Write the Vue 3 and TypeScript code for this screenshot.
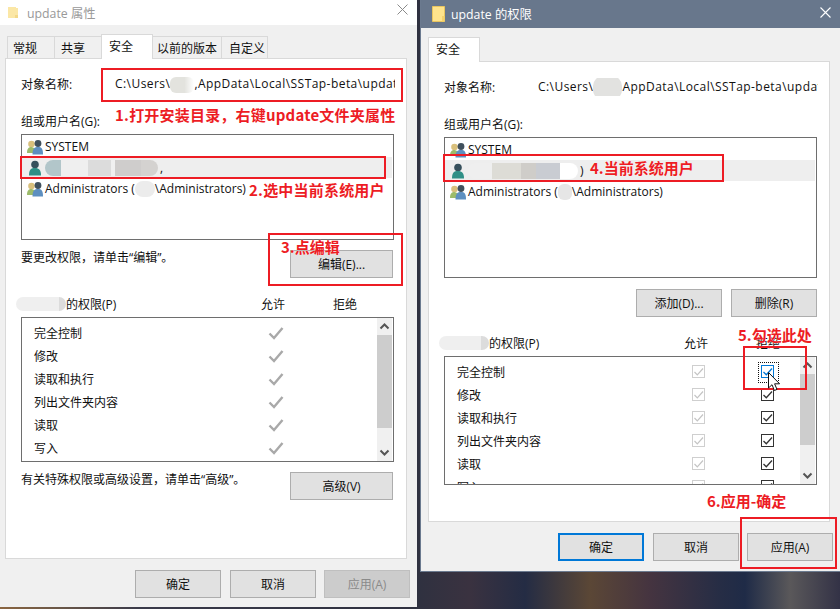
<script setup lang="ts">
const tabs = [
  { label: '常规', w: 48, pad: 5 },
  { label: '共享', w: 48, pad: 6 },
  { label: '安全', w: 52, pad: 7, active: true },
  { label: '以前的版本', w: 70, pad: 4 },
  { label: '自定义', w: 47, pad: 7 },
]
const perms = ['完全控制', '修改', '读取和执行', '列出文件夹内容', '读取', '写入']
const notes = [
  { cls: 'n1', text: '1.打开安装目录\uFF0C右键update文件夹属性' },
  { cls: 'n2', text: '2.选中当前系统用户' },
  { cls: 'n3', text: '3.点编辑' },
  { cls: 'n4', text: '4.当前系统用户' },
  { cls: 'n5', text: '5.勾选此处' },
  { cls: 'n6', text: '6.应用-确定' },
]
const frames = ['f1', 'f2', 'f3', 'f4', 'f5', 'f6']
const hintEdit = '要更改权限\uFF0C请单击\u201C编辑\u201D\u3002'
const hintAdv = '有关特殊权限或高级设置\uFF0C请单击\u201C高级\u201D\u3002'
</script>

<template>
  <div class="desk">
    <!-- left window -->
    <section class="win win-left">
      <header class="title title-left">
        <svg class="folder-l" viewBox="0 0 10 11"><path d="M0 0h8v1h2v10H0z" fill="#fbe7a6" /><path d="M7 8h3v3H7z" fill="#f3d888" /></svg>
        <span>update 属性</span>
        <svg class="close close-l" viewBox="0 0 11 11"><path d="M.5.5l10 10M10.5.5l-10 10" stroke="#8a8a8a" fill="none" /></svg>
      </header>
      <div class="tabs tabs-left">
        <div v-for="t in tabs" :key="t.label" class="tab" :class="{ active: t.active }" :style="{ width: t.w + 'px', paddingLeft: t.pad + 'px' }">{{ t.label }}</div>
      </div>
      <div class="panel panel-left">
        <div class="obj"><span class="obj-label">对象名称:</span>
          <span class="path">C:\Users\<i class="blot blot-path-l"></i>,AppData\Local\SSTap-beta\update</span>
        </div>
        <div class="lbl gap-group">组或用户名(G):</div>
        <div class="users users-left">
          <div class="u-row">
            <svg class="ico" viewBox="0 0 16 16"><circle cx="4.500" cy="5" r="3.300" fill="#d9c07c" /><path d="M0 14c0-5 2-6 4.500-6s4 2 4 6z" fill="#9cbb6a" /><circle cx="11" cy="4.500" r="3.400" fill="#40505c" /><path d="M5.500 15.500c0-6 2-7.500 5.500-7.500s5 1.500 5 7.500z" fill="#5d8fc0" /></svg>
            <span>SYSTEM</span>
          </div>
          <div class="u-row sel">
            <svg class="ico" viewBox="0 0 16 16"><circle cx="8" cy="4.500" r="3.800" fill="#37505c" /><path d="M2 15.500c0-6 2-7.500 6-7.500s6 2 6 7.500z" fill="#2f8f86" /></svg>
            <i class="blot blot-user-l"></i><span>,</span>
          </div>
          <div class="u-row">
            <svg class="ico" viewBox="0 0 16 16"><circle cx="4.500" cy="5" r="3.300" fill="#d9c07c" /><path d="M0 14c0-5 2-6 4.500-6s4 2 4 6z" fill="#9cbb6a" /><circle cx="11" cy="4.500" r="3.400" fill="#40505c" /><path d="M5.500 15.500c0-6 2-7.500 5.500-7.500s5 1.500 5 7.500z" fill="#5d8fc0" /></svg>
            <span>Administrators (<i class="blot blot-admin-l"></i>\Administrators)</span>
          </div>
        </div>
        <div class="action gap-act">
          <span class="hint">{{ hintEdit }}</span>
          <button class="btn wide">编辑(E)...</button>
        </div>
        <div class="perm-head gap-head">
          <span class="ph-name"><i class="blot blot-head"></i>的权限(P)</span><span class="ph-col">允许</span><span class="ph-col">拒绝</span>
        </div>
        <div class="perm-list perm-left">
          <div class="perm-rows">
            <div v-for="p in perms" :key="p" class="p-row">
              <span>{{ p }}</span>
              <svg class="tick" viewBox="0 0 16 14"><path d="M1.500 7.500l4.500 4.500L14.500 2" stroke="#a9a9a9" stroke-width="2.400" fill="none" /></svg>
            </div>
          </div>
          <div class="sbar">
            <svg class="arrow" viewBox="0 0 15 17"><path d="M3.500 10.500l4-4 4 4" stroke="#555" stroke-width="2" fill="none" /></svg>
            <div class="thumb thumb-l"></div>
            <div class="sfill"></div>
            <svg class="arrow" viewBox="0 0 15 17"><path d="M3.500 6.500l4 4 4-4" stroke="#555" stroke-width="2" fill="none" /></svg>
          </div>
        </div>
        <div class="action gap-act">
          <span class="hint">{{ hintAdv }}</span>
          <button class="btn wide">高级(V)</button>
        </div>
      </div>
      <footer class="foot foot-left">
        <button class="btn">确定</button>
        <button class="btn">取消</button>
        <button class="btn off">应用(A)</button>
      </footer>
    </section>

    <!-- right window -->
    <section class="win win-right">
      <header class="title title-right">
        <svg class="folder-r" viewBox="0 0 13 16"><path d="M.5.5h12v15H.5z" fill="#ffe48c" stroke="#e9c55f" /><path d="M10 10h2.500v5.500H10z" fill="#f5d26c" /></svg>
        <span>update 的权限</span>
        <svg class="close close-r" viewBox="0 0 11 11"><path d="M.5.5l10 10M10.500.5l-10 10" stroke="#fff" fill="none" stroke-width="1.100" /></svg>
      </header>
      <div class="tabs">
        <div class="tab active r-tab">安全</div>
      </div>
      <div class="panel panel-right">
        <div class="obj"><span class="obj-label">对象名称:</span>
          <span class="path">C:\Users\<i class="blot blot-path-r"></i>AppData\Local\SSTap-beta\update</span>
        </div>
        <div class="lbl gap-group">组或用户名(G):</div>
        <div class="users users-right">
          <div class="u-row">
            <svg class="ico" viewBox="0 0 16 16"><circle cx="4.500" cy="5" r="3.300" fill="#d9c07c" /><path d="M0 14c0-5 2-6 4.500-6s4 2 4 6z" fill="#9cbb6a" /><circle cx="11" cy="4.500" r="3.400" fill="#40505c" /><path d="M5.500 15.500c0-6 2-7.500 5.500-7.500s5 1.500 5 7.500z" fill="#5d8fc0" /></svg>
            <span>SYSTEM</span>
          </div>
          <div class="u-row sel">
            <svg class="ico" viewBox="0 0 16 16"><circle cx="8" cy="4.500" r="3.800" fill="#37505c" /><path d="M2 15.500c0-6 2-7.500 6-7.500s6 2 6 7.500z" fill="#2f8f86" /></svg>
            <i class="blot blot-user-r"></i><span>)</span>
          </div>
          <div class="u-row">
            <svg class="ico" viewBox="0 0 16 16"><circle cx="4.500" cy="5" r="3.300" fill="#d9c07c" /><path d="M0 14c0-5 2-6 4.500-6s4 2 4 6z" fill="#9cbb6a" /><circle cx="11" cy="4.500" r="3.400" fill="#40505c" /><path d="M5.500 15.500c0-6 2-7.500 5.500-7.500s5 1.500 5 7.500z" fill="#5d8fc0" /></svg>
            <span>Administrators (<i class="blot blot-admin-r"></i>\Administrators)</span>
          </div>
        </div>
        <div class="add-row">
          <button class="btn">添加(D)...</button>
          <button class="btn">删除(R)</button>
        </div>
        <div class="perm-head gap-head">
          <span class="ph-name"><i class="blot blot-head"></i>的权限(P)</span><span class="ph-col">允许</span><span class="ph-col">拒绝</span>
        </div>
        <div class="perm-list perm-right">
          <div class="perm-rows">
            <div v-for="(p, i) in perms" :key="p" class="p-row">
              <span>{{ p }}</span>
              <span class="cb cb-off"><svg viewBox="0 0 11 11"><path d="M1.500 6l2.800 2.800L10 2.500" stroke="#c4c4c4" stroke-width="1.200" fill="none" /></svg></span>
              <span class="cb" :class="{ 'cb-focus': i === 0 }"><svg viewBox="0 0 11 11"><path d="M1.500 6l2.800 2.800L10 2.500" :stroke="i === 0 ? '#0078d7' : '#333'" stroke-width="1.300" fill="none" /></svg></span>
            </div>
          </div>
          <div class="sbar">
            <svg class="arrow" viewBox="0 0 15 17"><path d="M3.500 10.500l4-4 4 4" stroke="#555" stroke-width="2" fill="none" /></svg>
            <div class="thumb thumb-r"></div>
            <div class="sfill"></div>
            <svg class="arrow" viewBox="0 0 15 17"><path d="M3.500 6.500l4 4 4-4" stroke="#555" stroke-width="2" fill="none" /></svg>
          </div>
        </div>
      </div>
      <footer class="foot foot-right">
        <button class="btn primary">确定</button>
        <button class="btn">取消</button>
        <button class="btn">应用(A)</button>
      </footer>
    </section>

    <!-- annotations lying over the windows -->
    <div v-for="f in frames" :key="f" class="frame" :class="f"></div>
    <div v-for="n in notes" :key="n.cls" class="note" :class="n.cls">{{ n.text }}</div>
    <svg class="cursor" viewBox="0 0 12 20"><path d="M.5.5v15.500l3.500-3.300 2.400 5.800 2.600-1.100-2.400-5.600h5z" fill="#fff" stroke="#111" /></svg>
  </div>
</template>

<style>
html, body { margin: 0; padding: 0; }
</style>

<style scoped>
.desk {
  position: relative;
  width: 840px;
  height: 609px;
  overflow: hidden;
  background: linear-gradient(90deg, #8a6540 0, #6a5748 60px, #3a3a4a 140px, #2f3140 417px, #3a3240 470px, #242c44 525px, #5b4736 590px, #453440 650px, #262d45 720px, #1f2b47 745px, #5a585a 790px, #333246 840px);
  font-family: "Open Sans", "Noto Sans CJK SC", sans-serif;
  font-size: 12px;
  color: #111;
}
.win { position: absolute; top: 0; background: #f0f0f0; }
.win-left { left: 0; width: 417px; height: 607px; }
.win-right { left: 420px; width: 420px; height: 572px; box-sizing: border-box; border-left: 1px solid #6b7a8f; border-bottom: 1px solid #6b7a8f; padding-left: 7px; }

.title { display: flex; align-items: center; font-size: 12.300px; }
.title-left { height: 25px; background: #fff; color: #999; padding-left: 8px; gap: 9px; }
.title-right { height: 28px; background: #68778c; color: #fff; margin-left: -7px; padding-left: 11px; gap: 6px; }
.folder-l { width: 10px; height: 11px; }
.folder-r { width: 13px; height: 16px; }
.close { width: 11px; height: 11px; position: absolute; }
.close-l { left: 397px; top: 4px; }
.close-r { left: 399px; top: 7px; }

.tabs { display: flex; align-items: flex-end; height: 24px; margin-top: 9px; position: relative; z-index: 1; }
.tabs-left { padding-left: 7px; }
.tab { height: 22px; box-sizing: border-box; border: 1px solid #d9d9d9; border-bottom: 0; margin-right: -1px; display: flex; align-items: center; background: #f0f0f0; }
.tab.active { height: 25px; background: #fff; margin-bottom: -1px; position: relative; padding-bottom: 2px; }
.r-tab { width: 52px; padding-left: 7px; }

.panel { box-sizing: border-box; width: 402px; background: #fff; border: 1px solid #d9d9d9; padding-left: 15px; }
.panel-left { margin-left: 5px; height: 501px; }
.panel-right { height: 461px; }

.obj { display: flex; align-items: center; height: 18px; margin-top: 16px; white-space: nowrap; }
.obj-label { width: 94px; flex: none; }
.path { width: 280px; overflow: hidden; letter-spacing: .45px; }
.lbl { height: 18px; line-height: 20px; }
.gap-group { margin-top: 19px; }

.users { box-sizing: border-box; width: 373px; border: 1px solid #6e6e6e; padding-top: 1px; margin-top: 4px; }
.users-left { height: 106px; }
.users-right { height: 141px; }
.u-row { display: flex; align-items: center; height: 21px; padding-left: 5px; gap: 2px; white-space: nowrap; }
.u-row.sel { background: #eeeeee; margin-right: 1px; }
.ico { width: 16px; height: 16px; flex: none; }

.blot { display: inline-block; vertical-align: middle; }
.blot-path-l { width: 24px; height: 16px; background: linear-gradient(90deg, #e3e3de 0 60%, #fff 100%); border-radius: 6px; }
.blot-path-r { width: 29px; height: 24px; background: #e2e2e0; border-radius: 10px; margin: -4px 0; }
.blot-user-l { width: 113px; height: 16px; background: linear-gradient(90deg, #b2c6ca 0 14%, #efefef 14% 38%, #dcdcdc 38% 58%, #f0f0f0 58% 62%, #cfcdcc 62% 85%, #d4d2d0 85% 100%); border-radius: 8px; }
.blot-user-r { width: 110px; height: 16px; background: linear-gradient(90deg, #efefef 0 22%, #dddcd6 22% 48%, #cfcdc9 48% 62%, #c9ccd2 62% 84%, #fff 84% 100%); border-radius: 8px; }
.blot-admin-l { width: 20px; height: 16px; background: #ececec; border-radius: 8px; }
.blot-admin-r { width: 14px; height: 16px; background: #e6e6e6; border-radius: 6px; }
.blot-head { width: 50px; height: 14px; background: linear-gradient(90deg, #efefef 0 85%, #dcdcdc 85%); border-radius: 7px; position: absolute; left: -50px; top: 2px; }

.action { display: flex; justify-content: space-between; width: 372px; height: 28px; }
.gap-act { margin-top: 10px; }
.hint { line-height: 15px; }
.add-row { display: flex; justify-content: flex-end; gap: 9px; width: 373px; margin-top: 11px; }

.btn { box-sizing: border-box; width: 86px; height: 28px; padding: 0; background: #e1e1e1; border: 1.500px solid #adadad; font: inherit; color: #111; }
.btn.wide { width: 103px; }
.btn.off { background: #cccccc; color: #8a8a8a; border-color: #bfbfbf; }
.btn.primary { border: 2px solid #0078d7; }

.perm-head { display: grid; grid-template-columns: 158px 46px 46px; column-gap: 26px; padding-left: 45px; height: 18px; line-height: 20px; }
.gap-head { margin-top: 17px; }
.ph-name { position: relative; white-space: nowrap; }
.ph-col { text-align: center; }

.perm-list { display: flex; box-sizing: border-box; width: 373px; border: 1px solid #6e6e6e; margin-top: 4px; overflow: hidden; }
.perm-left { height: 145px; }
.perm-right { height: 129px; }
.perm-rows { flex: 1; padding-top: 3px; min-width: 0; overflow: hidden; }
.p-row { display: grid; grid-template-columns: 195px 46px 46px; column-gap: 23px; align-items: center; justify-items: center; height: 23px; padding-left: 12px; }
.p-row > span:first-child { justify-self: start; }
.tick { width: 16px; height: 14px; margin-left: 2px; }
.cb { position: relative; box-sizing: border-box; width: 13px; height: 13px; border: 1px solid #333; display: flex; background: #fff; }
.cb svg { width: 11px; height: 11px; }
.cb-off { border-color: #cfcfcf; }
.cb-focus { border-color: #0078d7; }
.cb-focus::after { content: ""; position: absolute; left: -4px; top: -4px; width: 19px; height: 19px; border: 1px dotted #111; }

.sbar { width: 15px; margin-right: 1px; flex: none; display: flex; flex-direction: column; background: #f0f0f0; }
.arrow { width: 15px; height: 17px; flex: none; }
.thumb { background: #cdcdcd; flex: none; }
.thumb-l { height: 93px; }
.thumb-r { height: 71px; }
.sfill { flex: 1; }

.foot { display: flex; gap: 9px; padding-top: 11px; justify-content: flex-end; }
.foot-left { padding-right: 7px; }
.foot-left .btn:last-child, .foot-right .btn:last-child { margin-left: -1px; }
.foot-right { margin-right: 7px; }

.frame { position: absolute; box-sizing: border-box; border: 2px solid #ed1c24; }
.f1 { left: 101px; top: 68px; width: 302px; height: 34px; }
.f2 { left: 20px; top: 156px; width: 366px; height: 23px; }
.f3 { left: 268px; top: 233px; width: 135px; height: 53px; }
.f4 { left: 443px; top: 154px; width: 281px; height: 28px; }
.f5 { left: 743px; top: 346px; width: 64px; height: 44px; }
.f6 { left: 740px; top: 517px; width: 97px; height: 52px; }

.note { position: absolute; white-space: nowrap; color: #ed1c24; font: 700 15px/20px "Noto Sans CJK SC", sans-serif; text-shadow: 0 0 1px #fff; }
.n1 { left: 115px; top: 105px; letter-spacing: .2px; }
.n2 { left: 249px; top: 180px; letter-spacing: .2px; }
.n3 { left: 281px; top: 237px; }
.n4 { left: 590px; top: 158px; }
.n5 { left: 738px; top: 325px; }
.n6 { left: 707px; top: 491px; }

.cursor { position: absolute; left: 768px; top: 372px; width: 12px; height: 20px; }
</style>
